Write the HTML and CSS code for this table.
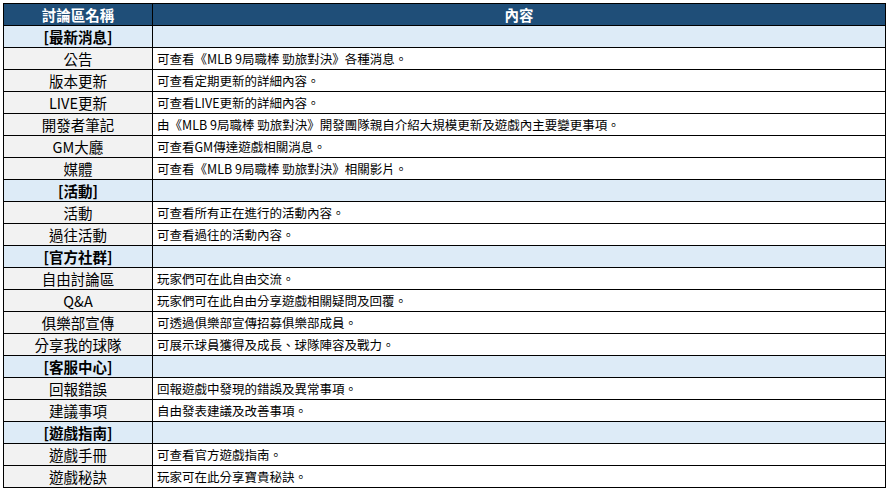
FILE: index.html
```html
<!DOCTYPE html>
<html lang="zh-Hant">
<head>
<meta charset="utf-8">
<title>討論區</title>
<link rel="stylesheet" href="styles.css">
</head>
<body>
<div class="wrap">
<table class="board">
  <colgroup><col class="c-name"><col class="c-desc"></colgroup>
  <thead>
    <tr class="head"><th>討論區名稱</th><th>內容</th></tr>
  </thead>
  <tbody>
    <tr class="cat"><td>[最新消息]</td><td></td></tr>
    <tr><td>公告</td><td>可查看《MLB 9局職棒 勁旅對決》各種消息。</td></tr>
    <tr><td>版本更新</td><td>可查看定期更新的詳細內容。</td></tr>
    <tr><td>LIVE更新</td><td>可查看LIVE更新的詳細內容。</td></tr>
    <tr><td>開發者筆記</td><td>由《MLB 9局職棒 勁旅對決》開發團隊親自介紹大規模更新及遊戲內主要變更事項。</td></tr>
    <tr><td>GM大廳</td><td>可查看GM傳達遊戲相關消息。</td></tr>
    <tr><td>媒體</td><td>可查看《MLB 9局職棒 勁旅對決》相關影片。</td></tr>
    <tr class="cat"><td>[活動]</td><td></td></tr>
    <tr><td>活動</td><td>可查看所有正在進行的活動內容。</td></tr>
    <tr><td>過往活動</td><td>可查看過往的活動內容。</td></tr>
    <tr class="cat"><td>[官方社群]</td><td></td></tr>
    <tr><td>自由討論區</td><td>玩家們可在此自由交流。</td></tr>
    <tr><td>Q&amp;A</td><td>玩家們可在此自由分享遊戲相關疑問及回覆。</td></tr>
    <tr><td>俱樂部宣傳</td><td>可透過俱樂部宣傳招募俱樂部成員。</td></tr>
    <tr><td>分享我的球隊</td><td>可展示球員獲得及成長、球隊陣容及戰力。</td></tr>
    <tr class="cat"><td>[客服中心]</td><td></td></tr>
    <tr><td>回報錯誤</td><td>回報遊戲中發現的錯誤及異常事項。</td></tr>
    <tr><td>建議事項</td><td>自由發表建議及改善事項。</td></tr>
    <tr class="cat"><td>[遊戲指南]</td><td></td></tr>
    <tr><td>遊戲手冊</td><td>可查看官方遊戲指南。</td></tr>
    <tr><td>遊戲秘訣</td><td>玩家可在此分享寶貴秘訣。</td></tr>
  </tbody>
</table>
</div>
</body>
</html>
```
FILE: styles.css
```css
html, body {
  margin: 0;
  padding: 0;
  background: #ffffff;
}
.wrap {
  padding: 3px;
}
.board {
  border-collapse: collapse;
  width: 883px;
  table-layout: fixed;
  font-family: "Noto Sans CJK TC", "Noto Sans", sans-serif;
  font-size: 14.5px;
  color: #000;
}
.c-name { width: 149px; }
.board th,
.board td {
  border: 1px solid #000;
  height: 21px;
  padding: 0 4px;
  line-height: 17px;
  white-space: nowrap;
  overflow: hidden;
}
.head th {
  background: #1f4e78;
  color: #ffffff;
  font-weight: bold;
  text-align: center;
}
.board td:first-child {
  background: #f2f2f2;
  text-align: center;
}
.board td:last-child {
  background: #ffffff;
  text-align: left;
  font-size: 12.5px;
}
.board tr.cat td {
  background: #ddebf7;
  font-weight: bold;
}
```
